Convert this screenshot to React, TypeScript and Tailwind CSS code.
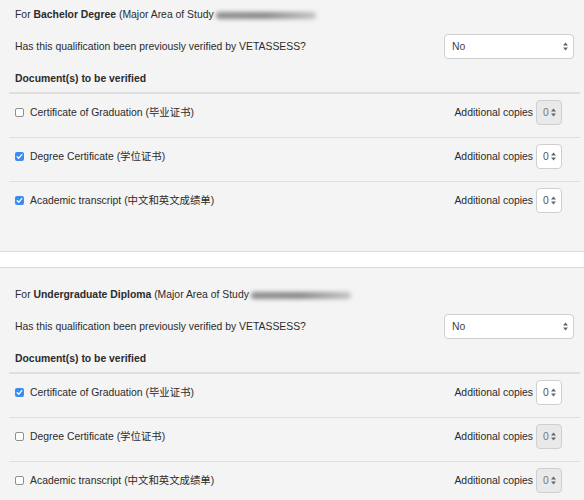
import type { FC } from "react";

interface DocItem {
  label: string;
  cn: string;
  checked: boolean;
}

interface Qualification {
  title: string;
  docs: DocItem[];
}

const qualifications: Qualification[] = [
  {
    title: "Bachelor Degree",
    docs: [
      { label: "Certificate of Graduation", cn: "毕业证书", checked: false },
      { label: "Degree Certificate", cn: "学位证书", checked: true },
      { label: "Academic transcript", cn: "中文和英文成绩单", checked: true },
    ],
  },
  {
    title: "Undergraduate Diploma",
    docs: [
      { label: "Certificate of Graduation", cn: "毕业证书", checked: true },
      { label: "Degree Certificate", cn: "学位证书", checked: false },
      { label: "Academic transcript", cn: "中文和英文成绩单", checked: false },
    ],
  },
];

const UpDown: FC = () => (
  <svg width="5" height="9" viewBox="0 0 5 9" className="shrink-0">
    <path d="M2.5 0.5 L5 3.6 L0 3.6 Z" fill="#666" />
    <path d="M2.5 8.5 L5 5.4 L0 5.4 Z" fill="#666" />
  </svg>
);

const Checkbox: FC<{ checked: boolean }> = ({ checked }) =>
  checked ? (
    <span className="flex h-[9px] w-[9px] items-center justify-center rounded-[2px] bg-[#3a8cf2]">
      <svg width="7" height="7" viewBox="0 0 7 7">
        <path
          d="M1.2 3.7 L2.8 5.2 L5.8 1.6"
          fill="none"
          stroke="#fff"
          strokeWidth="1.3"
          strokeLinecap="round"
          strokeLinejoin="round"
        />
      </svg>
    </span>
  ) : (
    <span className="h-[9px] w-[9px] rounded-[2px] border border-[#8f8f8f] bg-white" />
  );

const CopiesInput: FC<{ disabled: boolean }> = ({ disabled }) => (
  <div
    className={`flex h-[25px] w-[26px] items-center justify-between rounded-[4px] border border-[#cfcfcf] pl-[6px] pr-[5px] ${
      disabled ? "bg-[#e9e9e9] text-[#777]" : "bg-white text-[#555]"
    }`}
  >
    <span>0</span>
    <UpDown />
  </div>
);

const QualificationBlock: FC<{ q: Qualification }> = ({ q }) => (
  <section className="border-y border-[#dcdcdc] bg-[#f4f4f4] pl-[9px] pr-[4px] pt-[19px] pb-[26px]">
    <div className="flex h-4 items-center px-[6px]">
      <span>
        For <b className="font-bold">{q.title}</b> (Major Area of Study
      </span>
      {/* redacted field value */}
      <span className="ml-[2px] inline-block h-[7px] w-[100px] rounded-full bg-gradient-to-r from-[#8e8e8e] via-[#8a8a8a] to-[#c4c4c4] blur-[2px]" />
    </div>

    <div className="mt-[11px] flex h-[25px] items-center justify-between px-[6px]">
      <span>Has this qualification been previously verified by VETASSESS?</span>
      <div className="flex h-[25px] w-[130px] items-center justify-between rounded-[4px] border border-[#cfcfcf] bg-white pl-[7px] pr-[5px] text-[#444]">
        <span>No</span>
        <UpDown />
      </div>
    </div>

    <div className="mt-[12px] flex h-4 items-center px-[6px] font-bold">
      Document(s) to be verified
    </div>

    <div className="mt-[5px] border-t-2 border-[#dedede]">
      {q.docs.map((d, i) => (
        <div
          key={d.label}
          className={`flex items-center justify-between pl-[6px] pr-[18px] pt-[6px] pb-[12px] ${
            i < q.docs.length - 1 ? "border-b border-[#dedede]" : ""
          }`}
        >
          <div className="flex items-center gap-[6px]">
            <Checkbox checked={d.checked} />
            <span>
              {d.label} ({d.cn})
            </span>
          </div>
          <div className="flex h-[25px] items-center gap-[3px]">
            <span>Additional copies</span>
            <CopiesInput disabled={!d.checked} />
          </div>
        </div>
      ))}
    </div>
  </section>
);

const App: FC = () => (
  <div className="-mt-[13px] flex flex-col gap-[15px] bg-white font-['Liberation_Sans','Noto_Sans_CJK_SC',Arial,sans-serif] text-[10.4px] leading-4 text-[#2b2b2b]">
    {qualifications.map((q) => (
      <QualificationBlock key={q.title} q={q} />
    ))}
  </div>
);

export default App;
